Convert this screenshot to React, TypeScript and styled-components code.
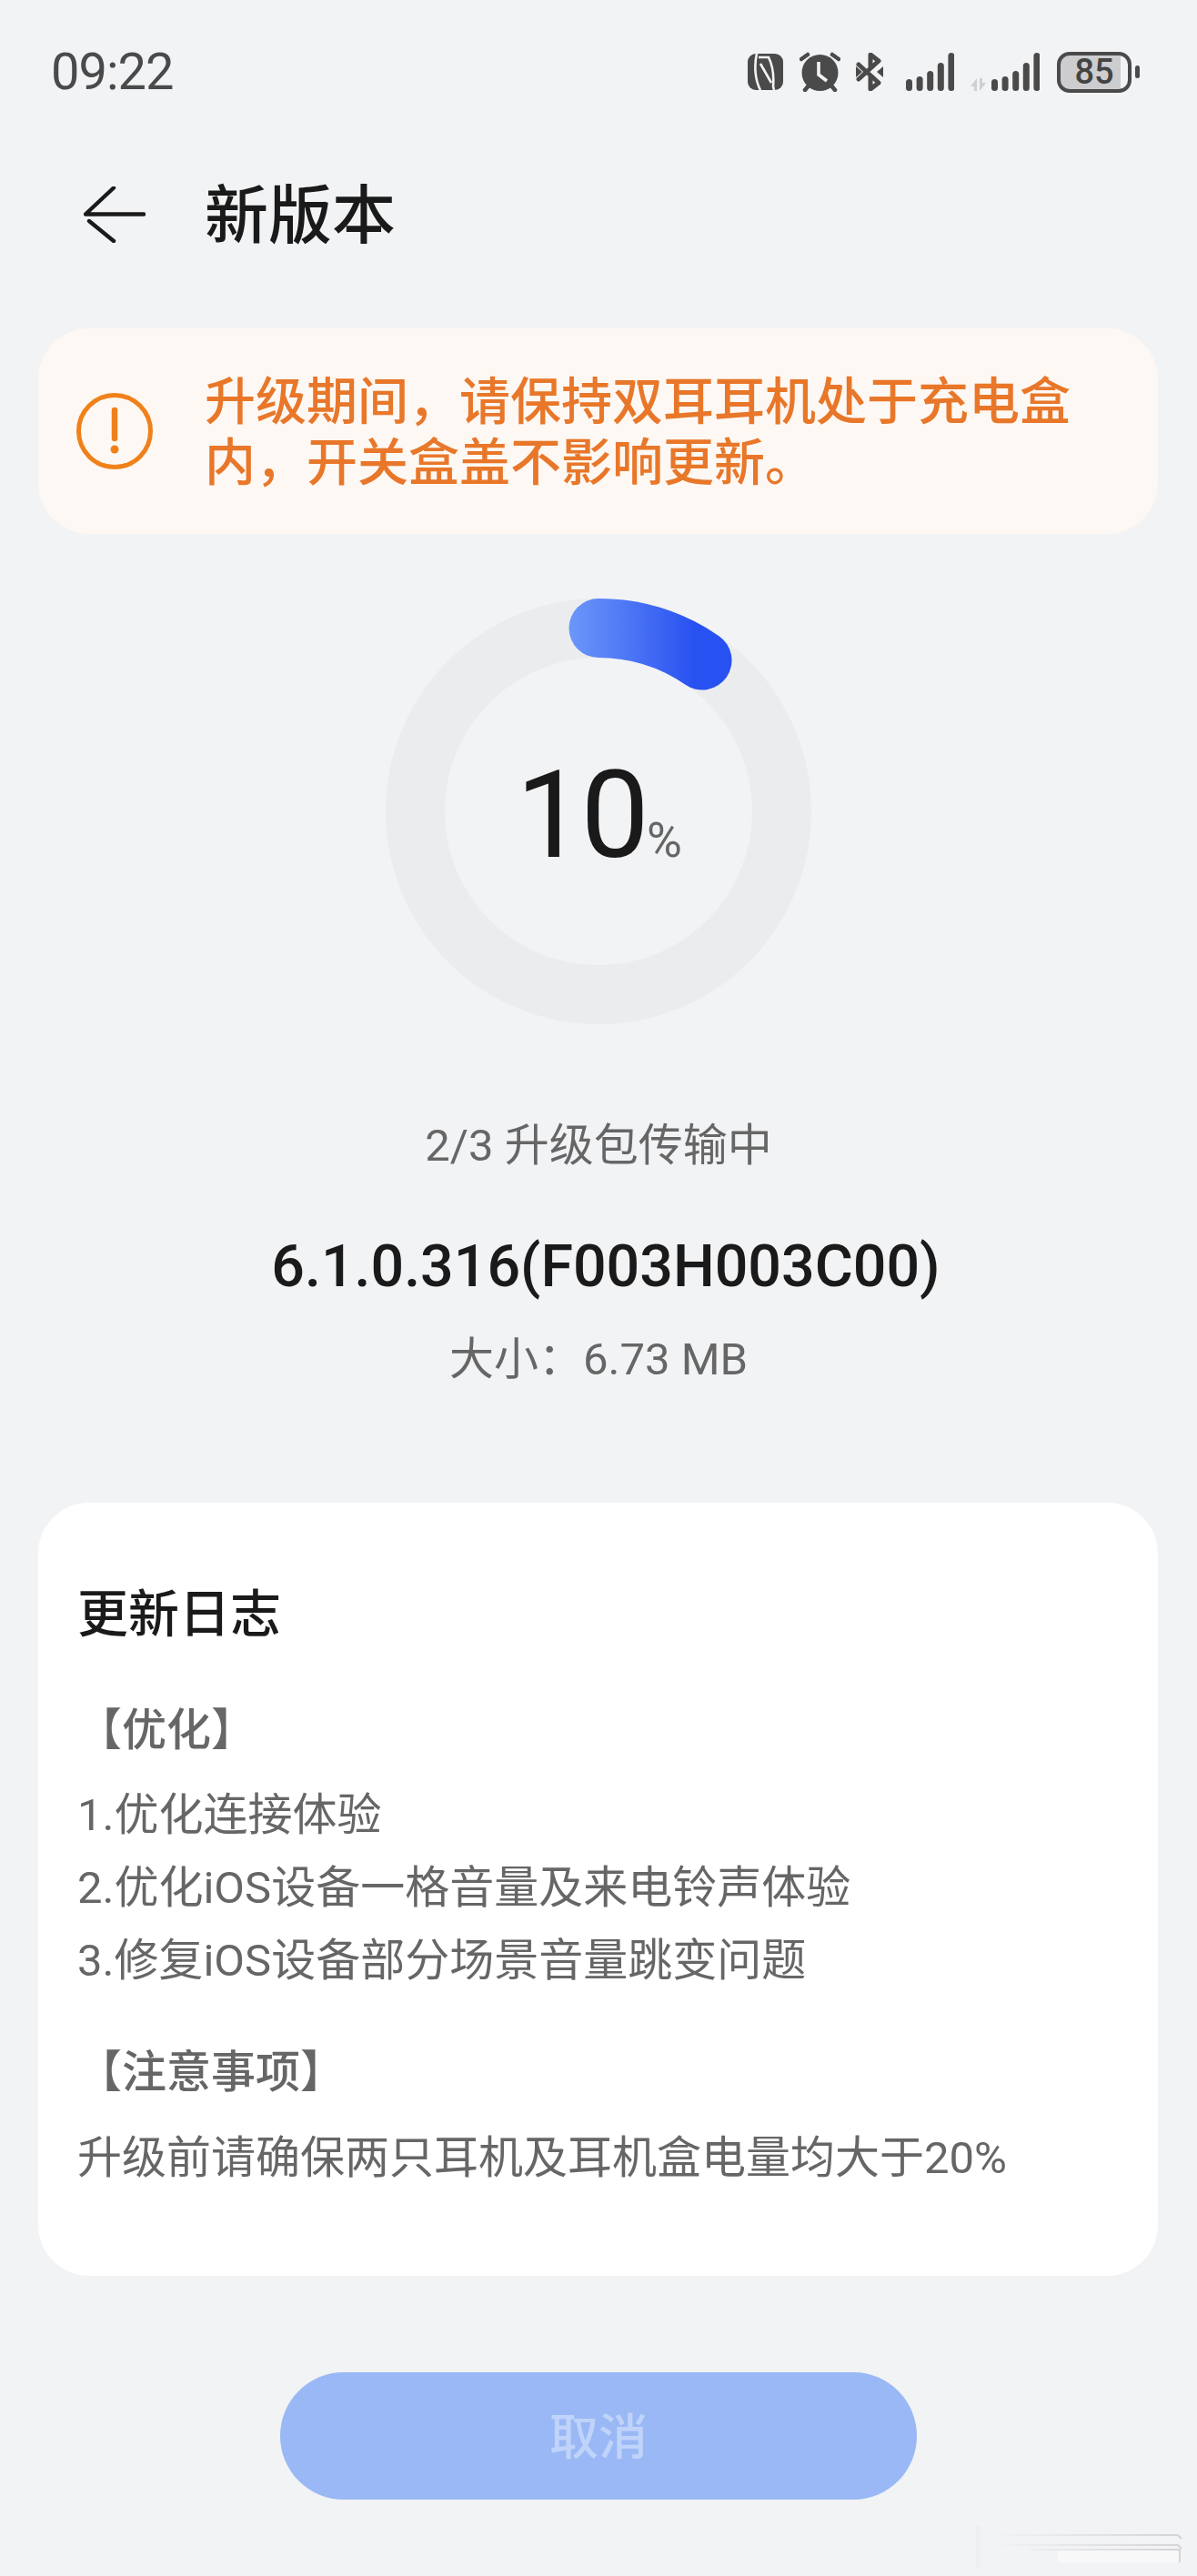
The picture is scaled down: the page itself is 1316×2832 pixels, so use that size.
import React from "react";
import styled, { createGlobalStyle } from "styled-components";

const FONT = `Roboto, "Noto Sans CJK SC", sans-serif`;

const GlobalStyle = createGlobalStyle`
  html, body {
    margin: 0;
    padding: 0;
    background: #f2f3f5;
  }
`;

const Page = styled.div`
  position: relative;
  width: 1316px;
  height: 2832px;
  overflow: hidden;
  background: #f2f3f5;
  font-family: ${FONT};
  display: flex;
  flex-direction: column;
`;

const StatusBar = styled.div`
  height: 156px;
  padding: 2px 63px 0 56px;
  box-sizing: border-box;
  display: flex;
  align-items: center;
  justify-content: space-between;
`;

const Time = styled.div`
  font-size: 56px;
  line-height: 60px;
  letter-spacing: -1px;
  color: #4a4a4a;
`;

const StatusIcons = styled.div`
  display: flex;
  align-items: center;
`;

const IconSlot = styled.svg<{ $gap: number }>`
  display: block;
  flex: none;
  margin-right: ${(p) => p.$gap}px;
`;

const Battery = styled.div`
  display: flex;
  align-items: center;
  gap: 4px;
`;

const BatteryBody = styled.div`
  box-sizing: border-box;
  width: 82px;
  height: 45px;
  border: 4px solid #4a4a4a;
  border-radius: 14px;
  background: linear-gradient(to right, #cdcdcf 89%, transparent 89%);
  background-clip: padding-box;
  display: flex;
  align-items: center;
  justify-content: center;
  font-size: 38px;
  font-weight: 500;
  color: #444;
`;

const BatteryCap = styled.div`
  width: 5px;
  height: 14px;
  border-radius: 3px;
  background: #4a4a4a;
`;

const Header = styled.div`
  height: 160px;
  padding-left: 92px;
  display: flex;
  align-items: center;
  gap: 65px;
`;

const Title = styled.h1`
  margin: 0;
  padding-top: 3px;
  font-size: 70px;
  line-height: 80px;
  font-weight: 500;
  color: #1a1a1a;
`;

const Banner = styled.div`
  box-sizing: border-box;
  margin: 45px 43px 0 42px;
  height: 226px;
  padding-left: 42px;
  border-radius: 56px;
  background: #fdf8f3;
  display: flex;
  align-items: center;
  gap: 57px;
`;

const BannerText = styled.div`
  width: 960px;
  padding-top: 3px;
  font-size: 56px;
  line-height: 67px;
  font-weight: 500;
  color: #e8772a;
`;

const RingWrap = styled.div`
  margin: 71px auto 0;
  width: 468px;
  height: 468px;
  display: grid;
  place-items: center;

  > * {
    grid-area: 1 / 1;
  }
`;

const Percent = styled.div`
  display: flex;
  align-items: baseline;
  gap: 1px;
  color: #1a1a1a;
  font-size: 134px;
  line-height: 134px;
  letter-spacing: -4px;
  padding: 36px 0 0 1px;
`;

const PercentSign = styled.span`
  font-size: 53px;
  letter-spacing: 0;
  color: #666;
`;

const CenterLine = styled.div<{ $size: number; $top: number; $height: number; $weight?: number; $dark?: boolean; $shift?: number }>`
  margin-top: ${(p) => p.$top}px;
  padding-left: ${(p) => p.$shift ?? 0}px;
  text-align: center;
  font-size: ${(p) => p.$size}px;
  line-height: ${(p) => p.$height}px;
  font-weight: ${(p) => p.$weight ?? 400};
  color: ${(p) => (p.$dark ? "#1a1a1a" : "#666")};
`;

const Card = styled.section`
  box-sizing: border-box;
  margin: 127px 43px 0 42px;
  height: 850px;
  padding: 88px 40px 0 43px;
  border-radius: 56px;
  background: #fff;
`;

const CardTitle = styled.h2`
  margin: 0 0 53px;
  font-size: 56px;
  line-height: 70px;
  font-weight: 500;
  color: #1a1a1a;
`;

const LogLine = styled.div<{ $gap?: number; $heading?: boolean }>`
  margin-top: ${(p) => p.$gap ?? 0}px;
  font-size: 49px;
  line-height: 80px;
  font-weight: ${(p) => (p.$heading ? 500 : 400)};
  color: #666;
`;

const CancelButton = styled.button`
  flex: none;
  margin: 106px auto 0;
  padding: 0 0 5px;
  width: 700px;
  height: 140px;
  border: 0;
  border-radius: 70px;
  background: #99b8f5;
  color: #c0d3fa;
  font-family: ${FONT};
  font-size: 54px;
  font-weight: 500;
`;

const ScreenshotMark = styled.svg`
  position: absolute;
  right: 13px;
  bottom: 9px;
`;

const NfcIcon = () => (
  <IconSlot $gap={18} width="39" height="40" viewBox="0 0 39 40">
    <rect width="39" height="40" rx="9" fill="#4a4a4a" />
    <path d="M10 0C7 13 8 29 14 40" fill="none" stroke="#f2f3f5" strokeWidth="2.6" />
    <path d="M12 4H23C28 14 29 24 28 36L29 40" fill="none" stroke="#f2f3f5" strokeWidth="2.6" />
    <path d="M14 11L26 32" fill="none" stroke="#f2f3f5" strokeWidth="2.6" />
  </IconSlot>
);

const AlarmIcon = () => (
  <IconSlot $gap={17} width="45" height="44" viewBox="0 0 45 44">
    <circle cx="22.5" cy="23" r="20" fill="#4a4a4a" />
    <path d="M2 8L9 3M36 3L43 8M6 42L11 36M34 36L39 42" fill="none" stroke="#4a4a4a" strokeWidth="4.5" strokeLinecap="round" />
    <path d="M21 11V25L30 32" fill="none" stroke="#f2f3f5" strokeWidth="3.6" />
  </IconSlot>
);

const BluetoothIcon = () => (
  <IconSlot $gap={25} width="30" height="42" viewBox="0 0 30 42">
    <path d="M3 13L25 33L16 40V26M3 29L25 9L16 2V16" fill="none" stroke="#4a4a4a" strokeWidth="5" strokeLinejoin="round" strokeLinecap="round" />
    <path d="M0 15L7 21L0 27ZM30 15L23 21L30 27Z" fill="#4a4a4a" />
  </IconSlot>
);

const SignalIcon = ({ gap, data }: { gap: number; data?: boolean }) => {
  const x = data ? 26 : 3;
  const tops = [29, 26, 20, 11, 0];
  return (
    <IconSlot $gap={gap} width={data ? 76 : 53} height="42" viewBox={`0 0 ${data ? 76 : 53} 42`}>
      {data && (
        <path d="M0 37L7 28V42H4V37ZM10 28H13V33H17L10 42Z" fill="#cfcfd1" />
      )}
      {tops.map((top, i) => (
        <rect key={i} x={x + i * 11.6 - 3} y={top} width="7" height={42 - top} rx="3.5" fill="#4a4a4a" />
      ))}
    </IconSlot>
  );
};

const AlertIcon = () => (
  <svg width="84" height="84" viewBox="0 0 84 84">
    <circle cx="42" cy="42" r="39.5" fill="none" stroke="#f0811a" strokeWidth="5" />
    <path d="M42 19V50" stroke="#f0811a" strokeWidth="6.5" strokeLinecap="round" />
    <circle cx="42" cy="62" r="4.5" fill="#f0811a" />
  </svg>
);

const BackArrow = () => (
  <svg width="68" height="62" viewBox="0 0 68 62">
    <path d="M33 1.5L2 30.5H66" fill="none" stroke="#1a1a1a" strokeWidth="4.4" strokeLinecap="round" strokeLinejoin="round" />
    <path d="M6 38L33 60" fill="none" stroke="#1a1a1a" strokeWidth="4.4" strokeLinecap="round" />
  </svg>
);

const ProgressRing = () => (
  <svg width="468" height="468" viewBox="0 0 468 468">
    <defs>
      <linearGradient id="ringFill" gradientUnits="userSpaceOnUse" x1="205" y1="60" x2="340" y2="60">
        <stop offset="0" stopColor="#6b95f9" />
        <stop offset="1" stopColor="#2851f1" />
      </linearGradient>
    </defs>
    <circle cx="234" cy="234" r="201.5" fill="none" stroke="#ebecee" strokeWidth="65" />
    <path d="M234 32.5A201.5 201.5 0 0 1 348 68" fill="none" stroke="url(#ringFill)" strokeWidth="65" strokeLinecap="round" />
  </svg>
);

const App = () => {
  return (
    <Page>
      <GlobalStyle />
      <StatusBar>
        <Time>09:22</Time>
        <StatusIcons>
          <NfcIcon />
          <AlarmIcon />
          <BluetoothIcon />
          <SignalIcon gap={18} />
          <SignalIcon gap={19} data />
          <Battery>
            <BatteryBody>85</BatteryBody>
            <BatteryCap />
          </Battery>
        </StatusIcons>
      </StatusBar>

      <Header>
        <BackArrow />
        <Title>新版本</Title>
      </Header>

      <Banner>
        <AlertIcon />
        <BannerText>{"升级期间\uFF0C请保持双耳耳机处于充电盒内\uFF0C开关盒盖不影响更新。"}</BannerText>
      </Banner>

      <RingWrap>
        <ProgressRing />
        <Percent>
          10<PercentSign>%</PercentSign>
        </Percent>
      </RingWrap>

      <CenterLine $size={49} $top={104} $height={60}>2/3 升级包传输中</CenterLine>
      <CenterLine $size={64.5} $top={62} $height={80} $weight={500} $dark $shift={16}>6.1.0.316(F003H003C00)</CenterLine>
      <CenterLine $size={49} $top={33} $height={60}>{"大小\uFF1A6.73 MB"}</CenterLine>

      <Card>
        <CardTitle>更新日志</CardTitle>
        <LogLine $heading>【优化】</LogLine>
        <LogLine $gap={13}>1.优化连接体验</LogLine>
        <LogLine>2.优化iOS设备一格音量及来电铃声体验</LogLine>
        <LogLine>3.修复iOS设备部分场景音量跳变问题</LogLine>
        <LogLine $gap={43} $heading>【注意事项】</LogLine>
        <LogLine $gap={14}>升级前请确保两只耳机及耳机盒电量均大于20%</LogLine>
      </Card>

      <CancelButton>取消</CancelButton>

      <ScreenshotMark width="270" height="46" viewBox="0 0 270 46">
        <defs>
          <linearGradient id="markFade" x1="0" y1="0" x2="1" y2="0">
            <stop offset="0" stopColor="#f2f3f5" />
            <stop offset="1" stopColor="#d4d4d6" />
          </linearGradient>
        </defs>
        <rect x="40" y="0" width="5" height="46" fill="#eeeff1" />
        <path d="M60 10H262L266 14M60 21H262L266 25M100 26H264V40" fill="none" stroke="url(#markFade)" strokeWidth="2" />
        <rect x="130" y="27" width="133" height="13" fill="#f8f8f9" />
      </ScreenshotMark>
    </Page>
  );
};

export default App;
